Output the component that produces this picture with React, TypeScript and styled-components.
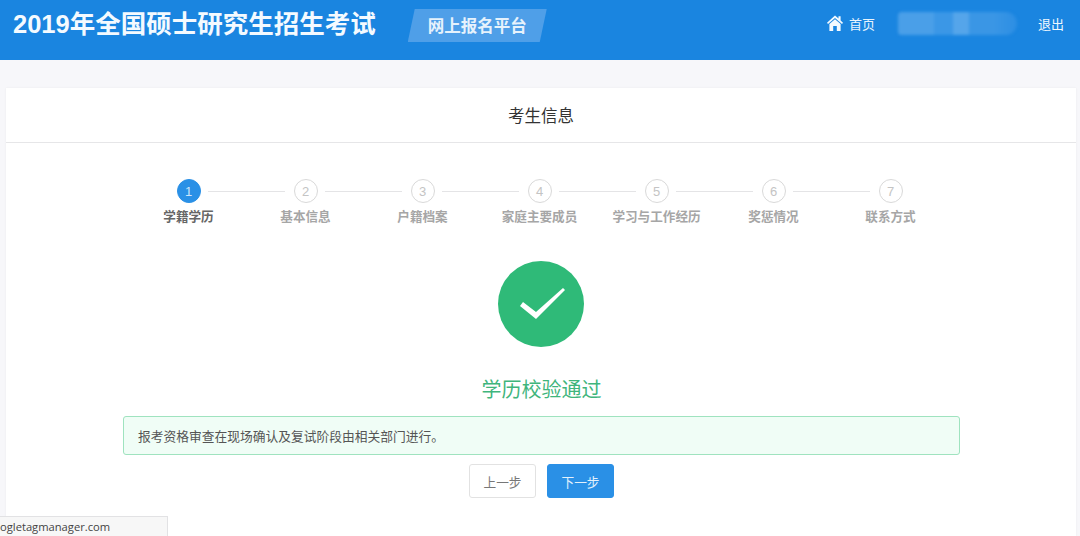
import React from "react";
import styled, { createGlobalStyle } from "styled-components";

const FONT = `"Liberation Sans", "Noto Sans CJK SC", sans-serif`;

const Global = createGlobalStyle`
  html, body { margin: 0; padding: 0; height: 100%; background: #f7f7fa; }
  body { font-family: ${FONT}; overflow: hidden; }
  #root { height: 536px; }
`;

const Page = styled.div`
  position: relative;
  height: 536px;
  overflow: hidden;
  display: flex;
  flex-direction: column;
`;

const TopBar = styled.header`
  flex: none;
  height: 60px;
  box-sizing: border-box;
  background: #1a85e0;
  display: flex;
  align-items: flex-start;
  padding-left: 13px;
  color: #fff;
`;

const SiteTitle = styled.h1`
  margin: 7px 0 0;
  font-size: 25.5px;
  line-height: 34px;
  font-weight: 700;
  white-space: nowrap;
  color: #f4faff;
`;

const PlatformBadge = styled.div`
  margin: 9px 0 0 32px;
  width: 139px;
  height: 33px;
  background: #4f9fe8;
  clip-path: polygon(7px 0, 100% 0, 132px 100%, 0 100%);
  display: flex;
  align-items: center;
  justify-content: center;
  padding-bottom: 2px;
  box-sizing: border-box;
  font-size: 16.5px;
  font-weight: 700;
  color: #e6f2fc;
`;

const TopNav = styled.nav`
  margin-left: auto;
  display: flex;
  align-items: center;
  height: 46px;
  padding-right: 16px;
  font-size: 13px;
`;

const HomeLink = styled.span`
  display: flex;
  align-items: center;
  gap: 6px;
  color: #e8f4fd;
`;

const HomeIcon = styled.svg`
  display: block;
  width: 16px;
  height: 16px;
  fill: #f4faff;
`;

const BlurredUser = styled.div`
  width: 119px;
  height: 23px;
  margin: 0 21px 0 23px;
  border-radius: 4px 12px 12px 4px;
  background: linear-gradient(90deg, #4a9fe8 0 30%, #3b97e6 30% 46%, #55a5ea 46% 60%, #3a96e5 60% 80%, #2c8ee3 100%);
  filter: blur(1.5px);
`;

const LogoutLink = styled.span`
  color: #f0f8fe;
`;

const Card = styled.main`
  flex: 1;
  margin: 28px 4px 0 6px;
  background: #fff;
  box-shadow: 0 0 2px rgba(0, 0, 0, 0.06);
  display: flex;
  flex-direction: column;
`;

const CardHeader = styled.div`
  flex: none;
  height: 54px;
  box-sizing: content-box;
  border-bottom: 1px solid #e6e6e8;
  display: flex;
  align-items: center;
  justify-content: center;
  font-size: 16.5px;
  color: #333;
`;

const CardBody = styled.div`
  flex: 1;
  padding: 36px 116px 0 117px;
  display: flex;
  flex-direction: column;
  align-items: center;
`;

const Steps = styled.ol`
  list-style: none;
  margin: 0 0 0 -4px;
  padding: 0;
  display: grid;
  grid-template-columns: repeat(7, 117px);
`;

const Step = styled.li`
  position: relative;
  display: flex;
  flex-direction: column;
  align-items: center;
`;

const StepCircle = styled.span<{ $active?: boolean }>`
  width: 24px;
  height: 24px;
  box-sizing: border-box;
  border-radius: 50%;
  display: flex;
  align-items: center;
  justify-content: center;
  font-size: 13px;
  background: ${(p) => (p.$active ? "#2a90e6" : "#fff")};
  border: 1px solid ${(p) => (p.$active ? "#2a90e6" : "#d9d9d9")};
  color: ${(p) => (p.$active ? "#cfe6fa" : "#c4c4c4")};
`;

const StepLine = styled.span`
  position: absolute;
  top: 12px;
  left: calc(50% + 19px);
  width: 77px;
  height: 1px;
  background: #e4e4e6;
`;

const StepLabel = styled.span<{ $active?: boolean }>`
  margin-top: 5px;
  font-size: 12.6px;
  line-height: 18px;
  font-weight: 700;
  white-space: nowrap;
  color: ${(p) => (p.$active ? "#666" : "#a6a6a6")};
`;

const CheckBadge = styled.svg`
  display: block;
  margin: 35px 0 0 -1px;
  width: 86px;
  height: 86px;
`;

const ResultTitle = styled.div`
  margin-top: 27px;
  font-size: 20px;
  line-height: 32px;
  color: #3fb57c;
`;

const Alert = styled.div`
  align-self: stretch;
  margin-top: 10px;
  height: 39px;
  box-sizing: border-box;
  border: 1px solid #9fe3bf;
  border-radius: 3px;
  background: #f0fdf6;
  display: flex;
  align-items: center;
  padding-left: 14px;
  padding-bottom: 1px;
  font-size: 12.75px;
  color: #555;
`;

const Actions = styled.div`
  margin-top: 9px;
  display: flex;
  gap: 11px;
`;

const Button = styled.button<{ $primary?: boolean }>`
  width: 67px;
  height: 34px;
  box-sizing: border-box;
  border-radius: 3px;
  border: 1px solid ${(p) => (p.$primary ? "#2a90e6" : "#e2e2e2")};
  background: ${(p) => (p.$primary ? "#2a90e6" : "#fff")};
  color: ${(p) => (p.$primary ? "#e3f1fc" : "#777")};
  font-family: ${FONT};
  font-size: 12.7px;
  padding: 0;
`;

const StatusBubble = styled.div`
  position: absolute;
  left: 0;
  bottom: 0;
  width: 168px;
  height: 20px;
  box-sizing: border-box;
  background: #f7f7f7;
  border-top: 1px solid #e2e2e4;
  border-right: 1px solid #e2e2e4;
  font-family: "Open Sans", "Liberation Sans", sans-serif;
  font-size: 11.2px;
  line-height: 19px;
  color: #444;
  white-space: nowrap;
  overflow: hidden;
`;

const STEPS = ["学籍学历", "基本信息", "户籍档案", "家庭主要成员", "学习与工作经历", "奖惩情况", "联系方式"];

export default function App() {
  return (
    <Page>
      <Global />
      <TopBar>
        <SiteTitle>2019年全国硕士研究生招生考试</SiteTitle>
        <PlatformBadge>网上报名平台</PlatformBadge>
        <TopNav>
          <HomeLink>
            <HomeIcon viewBox="0 0 16 16">
              <path d="M8 0.5 L11.5 3.6 V1.2 H13.6 V5.5 L16 7.7 L15 8.9 L8 2.9 L1 8.9 L0 7.7 Z" />
              <path d="M8 4.3 L13.6 9 V16 H9.8 V11 H6.2 V16 H2.4 V9 Z" />
            </HomeIcon>
            首页
          </HomeLink>
          <BlurredUser />
          <LogoutLink>退出</LogoutLink>
        </TopNav>
      </TopBar>
      <Card>
        <CardHeader>考生信息</CardHeader>
        <CardBody>
          <Steps>
            {STEPS.map((label, i) => (
              <Step key={label}>
                <StepCircle $active={i === 0}>{i + 1}</StepCircle>
                {i < STEPS.length - 1 && <StepLine />}
                <StepLabel $active={i === 0}>{label}</StepLabel>
              </Step>
            ))}
          </Steps>
          <CheckBadge viewBox="0 0 86 86">
            <circle cx="43" cy="43" r="43" fill="#2fba78" />
            <polygon points="22,45 25,41 38,51 65,27 67,29 38,58" fill="#fff" />
          </CheckBadge>
          <ResultTitle>学历校验通过</ResultTitle>
          <Alert>报考资格审查在现场确认及复试阶段由相关部门进行。</Alert>
          <Actions>
            <Button>上一步</Button>
            <Button $primary>下一步</Button>
          </Actions>
        </CardBody>
      </Card>
      <StatusBubble>ogletagmanager.com</StatusBubble>
    </Page>
  );
}
